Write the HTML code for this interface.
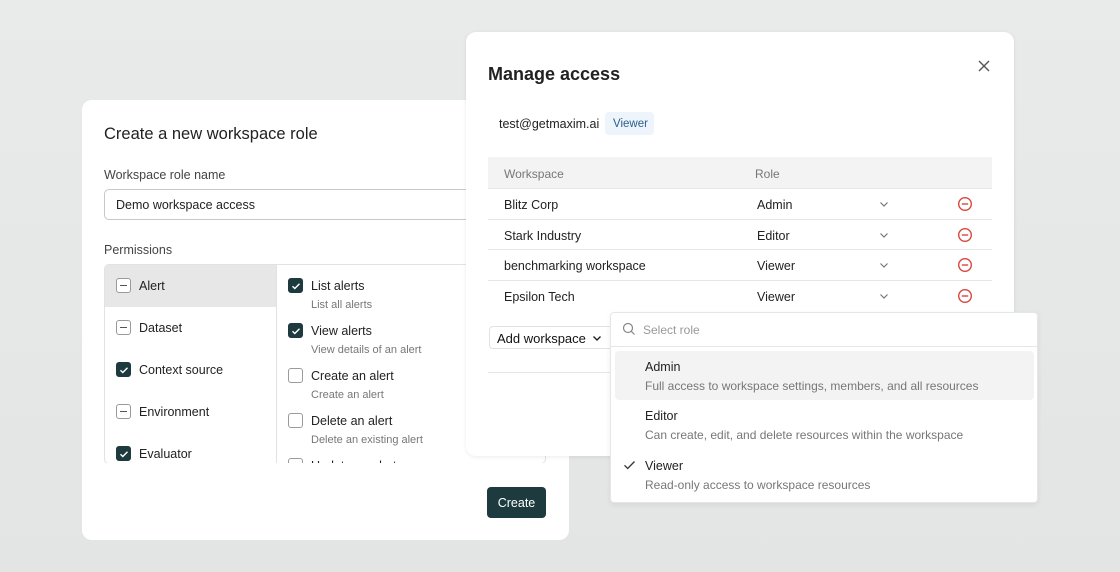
<!DOCTYPE html>
<html><head><style>
*{box-sizing:border-box;margin:0;padding:0}
body{width:1120px;height:572px;overflow:hidden;background:linear-gradient(180deg,#e9ebea,#e3e5e5);font-family:"Liberation Sans",sans-serif;color:#222;position:relative}
.abs{position:absolute}
.card{background:#fff;border-radius:10px}
.t{position:absolute;white-space:nowrap;line-height:1;margin-top:1px}
.cb{position:absolute;width:15px;height:15px;border-radius:3px;border:1.3px solid #9a9a9a;background:#fff}
.cb.on{background:#1d3a3f;border-color:#1d3a3f}
.cb.mid::after{content:"";position:absolute;left:3px;top:6px;width:7px;height:1.4px;background:#555}
.cb svg{position:absolute;left:1px;top:1px}
.gray{color:#777}
.row{position:absolute;left:488px;width:504px;height:1px;background:#e6e6e6}
</style></head><body>
<svg width="0" height="0" style="position:absolute"><defs><symbol id="ck" viewBox="0 0 12 12"><path d="M2.5 6.2l2.3 2.3 4.7-4.8" fill="none" stroke="#fff" stroke-width="1.4"/></symbol>
<symbol id="ch" viewBox="0 0 12 12"><path d="M2.5 4.5l3.5 3.5 3.5-3.5" fill="none" stroke="#777" stroke-width="1.2"/></symbol>
<symbol id="mn" viewBox="0 0 16 16"><circle cx="8" cy="8" r="6.3" fill="none" stroke="#d9463e" stroke-width="1.4"/><path d="M4.8 8h6.4" stroke="#d9463e" stroke-width="1.4"/></symbol></defs></svg>

<div class="abs card" style="left:82px;top:100px;width:487px;height:440px"></div>
<div class="t" style="left:104px;top:125px;font-size:16.5px;color:#222">Create a new workspace role</div>
<div class="t" style="left:104px;top:168px;font-size:12.5px;color:#444">Workspace role name</div>
<div class="abs" style="left:104px;top:189px;width:442px;height:31px;border:1px solid #c8c8c8;border-radius:5px"></div>
<div class="t" style="left:116px;top:198px;font-size:12.5px;color:#222">Demo workspace access</div>
<div class="t" style="left:104px;top:243px;font-size:12.5px;color:#444">Permissions</div>
<div class="abs" style="left:104px;top:264px;width:442px;height:200px;border:1px solid #e2e2e2;border-radius:5px;overflow:hidden">
 <div class="abs" style="left:0;top:0;width:172px;height:42px;background:#e7e7e7"></div>
 <div class="abs" style="left:171px;top:0;width:1px;height:200px;background:#e2e2e2"></div>
</div>
<div class="cb mid" style="left:116px;top:278px"></div><div class="t" style="left:139px;top:279px;font-size:12.5px">Alert</div>
<div class="cb mid" style="left:116px;top:320px"></div><div class="t" style="left:139px;top:321px;font-size:12.5px">Dataset</div>
<div class="cb on" style="left:116px;top:362px"><svg width="12" height="12"><use href="#ck"/></svg></div><div class="t" style="left:139px;top:363px;font-size:12.5px">Context source</div>
<div class="cb mid" style="left:116px;top:404px"></div><div class="t" style="left:139px;top:405px;font-size:12.5px">Environment</div>
<div class="cb on" style="left:116px;top:446px"><svg width="12" height="12"><use href="#ck"/></svg></div><div class="t" style="left:139px;top:447px;font-size:12.5px">Evaluator</div>
<div class="abs" style="left:105px;top:463px;width:440px;height:10px;background:#fff"></div>
<div class="cb on" style="left:288px;top:278px"><svg width="12" height="12"><use href="#ck"/></svg></div><div class="t" style="left:311px;top:279px;font-size:12.5px">List alerts</div><div class="t gray" style="left:311px;top:299px;font-size:11px">List all alerts</div>
<div class="cb on" style="left:288px;top:323px"><svg width="12" height="12"><use href="#ck"/></svg></div><div class="t" style="left:311px;top:324px;font-size:12.5px">View alerts</div><div class="t gray" style="left:311px;top:344px;font-size:11px">View details of an alert</div>
<div class="cb" style="left:288px;top:368px"></div><div class="t" style="left:311px;top:369px;font-size:12.5px">Create an alert</div><div class="t gray" style="left:311px;top:389px;font-size:11px">Create an alert</div>
<div class="cb" style="left:288px;top:413px"></div><div class="t" style="left:311px;top:414px;font-size:12.5px">Delete an alert</div><div class="t gray" style="left:311px;top:434px;font-size:11px">Delete an existing alert</div>
<div class="abs" style="left:288px;top:458px;width:15px;height:5px;border:1.3px solid #9a9a9a;border-bottom:none;border-radius:3px 3px 0 0"></div>
<div class="abs" style="left:311px;top:458px;width:85px;height:5px;overflow:hidden"><div class="t" style="left:0;top:1px;font-size:12.5px">Update an alert</div></div>
<div class="abs" style="left:487px;top:487px;width:59px;height:31px;background:#1d3a3f;border-radius:4px"></div>
<div class="t" style="left:487px;width:59px;text-align:center;top:496px;font-size:12.5px;color:#fff">Create</div>

<div class="abs card" style="left:466px;top:32px;width:548px;height:424px;box-shadow:0 1px 4px rgba(0,0,0,.08)"></div>
<div class="t" style="left:488px;top:64px;font-size:18px;font-weight:bold;color:#222">Manage access</div>
<svg class="abs" style="left:978px;top:60px" width="12" height="12"><path d="M1 1l10 10M11 1L1 11" stroke="#555" stroke-width="1.4"/></svg>
<div class="t" style="left:499px;top:117px;font-size:12.5px">test@getmaxim.ai</div>
<div class="abs" style="left:605px;top:112px;width:49px;height:23px;background:#edf4fb;border-radius:4px"></div>
<div class="t" style="left:613px;top:118px;font-size:11.5px;color:#2b5e8c">Viewer</div>
<div class="abs" style="left:488px;top:157px;width:504px;height:31px;background:#f3f3f3"></div>
<div class="t gray" style="left:504px;top:167px;font-size:12px">Workspace</div>
<div class="t gray" style="left:755px;top:167px;font-size:12px">Role</div>
<div class="row" style="top:188px"></div><div class="row" style="top:219px"></div><div class="row" style="top:249px"></div><div class="row" style="top:280px"></div>
<div class="t" style="left:504px;top:198px;font-size:12.5px">Blitz Corp</div><div class="t" style="left:757px;top:198px;font-size:12.5px">Admin</div>
<div class="t" style="left:504px;top:229px;font-size:12.5px">Stark Industry</div><div class="t" style="left:757px;top:229px;font-size:12.5px">Editor</div>
<div class="t" style="left:504px;top:259px;font-size:12.5px">benchmarking workspace</div><div class="t" style="left:757px;top:259px;font-size:12.5px">Viewer</div>
<div class="t" style="left:504px;top:290px;font-size:12.5px">Epsilon Tech</div><div class="t" style="left:757px;top:290px;font-size:12.5px">Viewer</div>
<svg class="abs" style="left:878px;top:198px" width="12" height="12"><use href="#ch"/></svg>
<svg class="abs" style="left:878px;top:229px" width="12" height="12"><use href="#ch"/></svg>
<svg class="abs" style="left:878px;top:259px" width="12" height="12"><use href="#ch"/></svg>
<svg class="abs" style="left:878px;top:290px" width="12" height="12"><use href="#ch"/></svg>
<svg class="abs" style="left:957px;top:196px" width="16" height="16"><use href="#mn"/></svg>
<svg class="abs" style="left:957px;top:227px" width="16" height="16"><use href="#mn"/></svg>
<svg class="abs" style="left:957px;top:257px" width="16" height="16"><use href="#mn"/></svg>
<svg class="abs" style="left:957px;top:288px" width="16" height="16"><use href="#mn"/></svg>
<div class="abs" style="left:489px;top:326px;width:130px;height:23px;border:1px solid #e2e2e2;border-radius:4px"></div>
<div class="t" style="left:497px;top:331px;font-size:13px;color:#111">Add workspace</div>
<svg class="abs" style="left:591px;top:332px" width="12" height="12"><path d="M2.5 4.5l3.5 3.5 3.5-3.5" fill="none" stroke="#222" stroke-width="1.4"/></svg>
<div class="row" style="top:372px;width:130px"></div>

<div class="abs" style="left:610px;top:312px;width:428px;height:191px;background:#fff;border:1px solid #e6e6e6;border-radius:4px;box-shadow:0 2px 6px rgba(0,0,0,.06)"></div>
<svg class="abs" style="left:622px;top:322px" width="14" height="14"><circle cx="6" cy="6" r="4.5" fill="none" stroke="#888" stroke-width="1.2"/><path d="M9.3 9.3l3.2 3.2" stroke="#888" stroke-width="1.2"/></svg>
<div class="t" style="left:643px;top:323px;font-size:12px;color:#999">Select role</div>
<div class="abs" style="left:611px;top:346px;width:426px;height:1px;background:#e6e6e6"></div>
<div class="abs" style="left:615px;top:351px;width:419px;height:49px;background:#f3f3f3;border-radius:4px"></div>
<div class="t" style="left:645px;top:360px;font-size:12.5px">Admin</div><div class="t gray" style="left:645px;top:379px;font-size:12px">Full access to workspace settings, members, and all resources</div>
<div class="t" style="left:645px;top:409px;font-size:12.5px">Editor</div><div class="t gray" style="left:645px;top:428px;font-size:12px">Can create, edit, and delete resources within the workspace</div>
<svg class="abs" style="left:623px;top:459px" width="13" height="12"><path d="M1.5 6.3l3.2 3.2 6.8-7" fill="none" stroke="#333" stroke-width="1.3"/></svg>
<div class="t" style="left:645px;top:459px;font-size:12.5px">Viewer</div><div class="t gray" style="left:645px;top:478px;font-size:12px">Read-only access to workspace resources</div>
</body></html>
